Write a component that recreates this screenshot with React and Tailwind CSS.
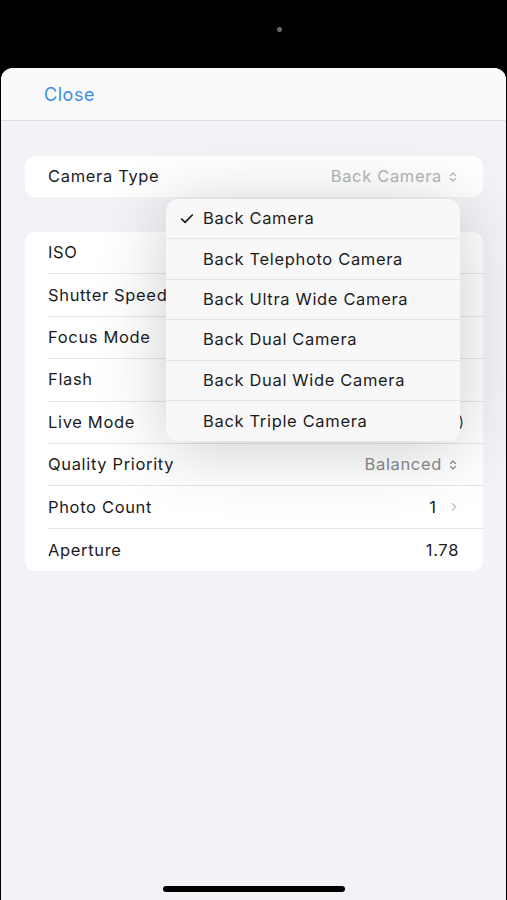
import React from 'react';
import { Check, ChevronRight, ChevronsUpDown } from 'lucide-react';

const font = { fontFamily: 'Inter, "Noto Sans", sans-serif' };

const rows = [
  { label: 'ISO' },
  { label: 'Shutter Speed' },
  { label: 'Focus Mode' },
  { label: 'Flash' },
  { label: 'Live Mode', value: ')' },
  { label: 'Quality Priority', value: 'Balanced', picker: true },
  { label: 'Photo Count', value: '1', link: true },
  { label: 'Aperture', value: '1.78', plain: true },
];

const cameras = [
  'Back Camera',
  'Back Telephoto Camera',
  'Back Ultra Wide Camera',
  'Back Dual Camera',
  'Back Dual Wide Camera',
  'Back Triple Camera',
];

function Row({ row, last }) {
  return (
    <div className="h-[42.4px] flex items-center pl-[23px]">
      <div className={`flex-1 h-full flex items-center pr-[24px] ${last ? '' : 'border-b border-[#e4e4e6]'}`}>
        <span className="flex-1 text-[16.5px] tracking-[0.04em] text-[#1c1c1e] whitespace-nowrap">{row.label}</span>
        {row.picker && (
          <span className="flex items-center gap-[5px] text-[16.5px] tracking-[0.04em] text-[#8a8a8e]">
            {row.value}
            <ChevronsUpDown size={12} strokeWidth={2.4} />
          </span>
        )}
        {row.link && (
          <span className="flex items-center gap-[11px] text-[16.5px] text-[#1c1c1e]">
            {row.value}
            <ChevronRight size={14} strokeWidth={2.2} className="text-[#c4c4c7] -mr-[2px]" />
          </span>
        )}
        {row.plain && <span className="text-[16.5px] tracking-[0.04em] text-[#1c1c1e]">{row.value}</span>}
        {!row.picker && !row.link && !row.plain && row.value && (
          <span className="text-[15px] text-[#3a3a3c] -mr-[5px]">{row.value}</span>
        )}
      </div>
    </div>
  );
}

export default function App() {
  return (
    <div className="w-full h-[900px] bg-black flex flex-col overflow-hidden" style={font}>
      <div className="h-[68px] shrink-0 flex justify-center pt-[27px]">
        <div className="w-[5px] h-[5px] rounded-full bg-[#6b6b6b] ml-[51px]" />
      </div>

      <div className="flex-1 mx-[1px] rounded-t-[12px] bg-[#f2f2f7] relative flex flex-col overflow-hidden">
        <div className="h-[53px] shrink-0 bg-[#fafafa] border-b border-[#dcdcdf] flex items-center pl-[43px] pt-[1px]">
          <span className="text-[18px] tracking-[0.03em] text-[#3d8ee6]">Close</span>
        </div>

        <div className="pl-[24px] pr-[23px] pt-[35px] flex flex-col gap-[35px]">
          <div className="h-[41px] bg-white rounded-[10px] flex items-center pl-[23px] pr-[24px]">
            <span className="flex-1 text-[16.5px] tracking-[0.04em] text-[#1c1c1e]">Camera Type</span>
            <span className="flex items-center gap-[5px] text-[16.5px] tracking-[0.04em] text-[#b5b5b8]">
              Back Camera
              <ChevronsUpDown size={12} strokeWidth={2.4} />
            </span>
          </div>

          <div className="bg-white rounded-[10px] flex flex-col overflow-hidden">
            {rows.map((r, i) => (
              <Row key={r.label} row={r} last={i === rows.length - 1} />
            ))}
          </div>
        </div>

        <div className="absolute left-[165px] top-[131px] w-[294px] bg-[#f8f8f8] rounded-[12px] shadow-[0_8px_70px_rgba(0,0,0,0.2)] flex flex-col overflow-hidden">
          {cameras.map((c, i) => (
            <div
              key={c}
              className={`h-[40.4px] flex items-center ${i < cameras.length - 1 ? 'border-b border-[#e6e6e8]' : ''}`}
            >
              <span className="w-[37px] flex justify-center pl-[5px]">
                {i === 0 && <Check size={16} strokeWidth={2.6} className="text-[#1c1c1e]" />}
              </span>
              <span className="text-[16.5px] tracking-[0.04em] text-[#1c1c1e]">{c}</span>
            </div>
          ))}
        </div>

        <div className="flex-1" />
        <div className="flex justify-center pb-[8px]">
          <div className="w-[182px] h-[6px] rounded-full bg-black" />
        </div>
      </div>
    </div>
  );
}
